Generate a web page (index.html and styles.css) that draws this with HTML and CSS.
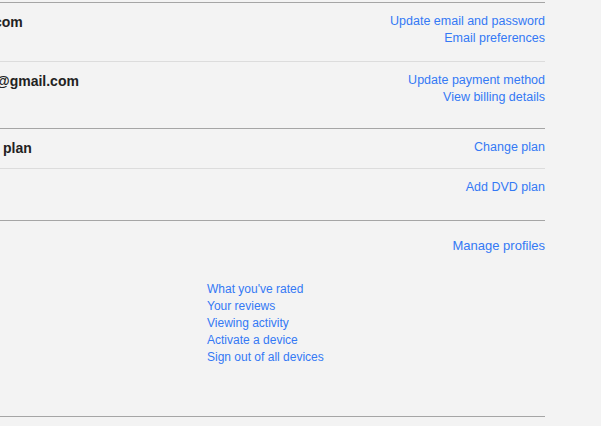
FILE: index.html
```html
<!DOCTYPE html>
<html lang="en">
<head>
    <meta charset="UTF-8">
    <meta name="viewport" content="width=device-width, initial-scale=1.0">
    <title>Account</title>
    <link rel="stylesheet" href="styles.css">
</head>
<body>
    <div class="account">
        <div class="section membership">
            <div class="row">
                <div class="info email"><b>com</b></div>
                <div class="links">
                    <a href="#">Update email and password</a>
                    <a href="#">Email preferences</a>
                </div>
            </div>
            <div class="row sub">
                <div class="info payment"><b>@gmail.com</b></div>
                <div class="links">
                    <a href="#">Update payment method</a>
                    <a href="#">View billing details</a>
                </div>
            </div>
        </div>

        <div class="section plan">
            <div class="row">
                <div class="info plan-name"><b>plan</b></div>
                <div class="links">
                    <a href="#">Change plan</a>
                </div>
            </div>
            <div class="row sub">
                <div class="info"></div>
                <div class="links">
                    <a href="#">Add DVD plan</a>
                </div>
            </div>
        </div>

        <div class="section profile">
            <div class="row">
                <div class="info"></div>
                <div class="links big">
                    <a href="#">Manage profiles</a>
                </div>
            </div>
            <div class="profile-links">
                <a href="#">What you've rated</a>
                <a href="#">Your reviews</a>
                <a href="#">Viewing activity</a>
                <a href="#">Activate a device</a>
                <a href="#">Sign out of all devices</a>
            </div>
        </div>

        <div class="section last"></div>
    </div>
</body>
</html>
```

FILE: styles.css
```css
body {
    font-family: "Liberation Sans", Arial, sans-serif;
    background-color: #f3f3f3;
    color: #222;
    margin: 0;
}

.account {
    width: 545px;
    margin-top: 2px;
}

.section {
    border-top: 1px solid #a5a5a5;
    padding-bottom: 10px;
}

.row {
    display: flex;
    justify-content: space-between;
    align-items: flex-start;
    padding: 10px 0 12px;
}

.row.sub {
    border-top: 1px solid #dcdcdc;
}

.membership .row:first-child {
    padding-bottom: 14px;
}

.plan {
    padding-bottom: 12px;
}

.info {
    font-size: 14px;
    line-height: 19px;
    margin-bottom: -2px;
}

/* left column is cut off by the window edge */
.info.email {
    margin-left: -6px;
}

.info.payment {
    margin-left: -4px;
}

.info.plan-name {
    margin-left: 3px;
}

.links {
    display: flex;
    flex-direction: column;
    align-items: flex-end;
    font-size: 12.5px;
    line-height: 17px;
}

.links.big {
    font-size: 13px;
    padding-top: 6px;
}

a {
    color: #3479f5;
    text-decoration: none;
}

.profile-links {
    display: flex;
    flex-direction: column;
    align-items: flex-start;
    padding: 15px 0 40px 207px;
    font-size: 12px;
    line-height: 17px;
}

.last {
    padding: 0;
    height: 10px;
}
```
